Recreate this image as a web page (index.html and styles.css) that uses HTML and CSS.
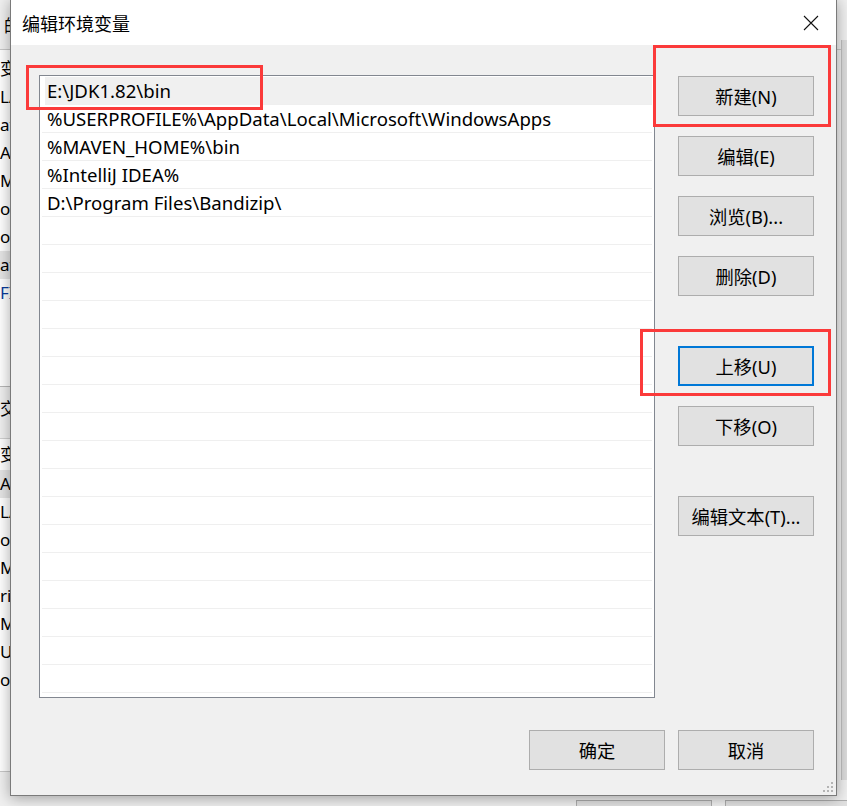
FILE: index.html
```html
<!DOCTYPE html>
<html lang="zh">
<head>
<meta charset="utf-8">
<title>编辑环境变量</title>
<link rel="stylesheet" href="styles.css">
</head>
<body>
<div class="stage">
  <div class="bgwin">
    <div class="bg-top"><span class="bg-clip">的</span></div>
    <div class="bg-list">
      <div class="bg-head"><span class="bg-clip">变量</span></div>
      <div class="bg-row"><span class="bg-clip">LA</span></div>
      <div class="bg-row"><span class="bg-clip">at</span></div>
      <div class="bg-row"><span class="bg-clip">AV</span></div>
      <div class="bg-row"><span class="bg-clip">MA</span></div>
      <div class="bg-row"><span class="bg-clip">on</span></div>
      <div class="bg-row"><span class="bg-clip">on</span></div>
      <div class="bg-row bg-sel"><span class="bg-clip">at</span></div>
      <div class="bg-row bg-blue"><span class="bg-clip">FI</span></div>
    </div>
    <div class="bg-gap"><span class="bg-clip">交</span></div>
    <div class="bg-list bg-list2">
      <div class="bg-head"><span class="bg-clip">变量</span></div>
      <div class="bg-row bg-sel"><span class="bg-clip">A</span></div>
      <div class="bg-row"><span class="bg-clip">LA</span></div>
      <div class="bg-row"><span class="bg-clip">o</span></div>
      <div class="bg-row"><span class="bg-clip">M</span></div>
      <div class="bg-row"><span class="bg-clip">ri</span></div>
      <div class="bg-row"><span class="bg-clip">MA</span></div>
      <div class="bg-row"><span class="bg-clip">U</span></div>
      <div class="bg-row"><span class="bg-clip">os</span></div>
    </div>
    <div class="bg-right"></div>
    <div class="bg-btn bg-btn1"></div>
    <div class="bg-btn bg-btn2"></div>
  </div>

  <div class="dialog">
    <div class="titlebar">
      <span class="title">编辑环境变量</span>
      <svg class="close" width="16" height="16" viewBox="0 0 16 16"><path d="M1 1 L15 15 M15 1 L1 15" stroke="#111" stroke-width="1.1" fill="none"/></svg>
    </div>
    <div class="main">
      <div class="listbox">
        <div class="row sel">E:\JDK1.82\bin</div>
        <div class="row">%USERPROFILE%\AppData\Local\Microsoft\WindowsApps</div>
        <div class="row">%MAVEN_HOME%\bin</div>
        <div class="row">%IntelliJ IDEA%</div>
        <div class="row">D:\Program Files\Bandizip\</div>
        <div class="row"></div><div class="row"></div><div class="row"></div>
        <div class="row"></div><div class="row"></div><div class="row"></div>
        <div class="row"></div><div class="row"></div><div class="row"></div>
        <div class="row"></div><div class="row"></div><div class="row"></div>
        <div class="row"></div><div class="row"></div><div class="row"></div>
        <div class="row"></div><div class="row"></div><div class="row"></div>
      </div>
      <div class="btncol">
        <button class="btn">新建(N)</button>
        <button class="btn">编辑(E)</button>
        <button class="btn">浏览(B)...</button>
        <button class="btn">删除(D)</button>
        <button class="btn focus gap">上移(U)</button>
        <button class="btn">下移(O)</button>
        <button class="btn gap">编辑文本(T)...</button>
      </div>
    </div>
    <div class="footer">
      <button class="btn">确定</button>
      <button class="btn">取消</button>
    </div>
    <div class="grip">
      <i class="d1"></i><i class="d2"></i><i class="d3"></i><i class="d4"></i><i class="d5"></i><i class="d6"></i>
    </div>
  </div>

  <div class="mark mark1"></div>
  <div class="mark mark2"></div>
  <div class="mark mark3"></div>
</div>
</body>
</html>
```
FILE: styles.css
```css
* { box-sizing: border-box; }
html, body { margin: 0; padding: 0; }
body {
  width: 847px;
  height: 806px;
  overflow: hidden;
  font-family: "Noto Sans", "Noto Sans CJK SC", sans-serif;
  color: #000;
}
.stage {
  position: relative;
  width: 847px;
  height: 806px;
  background: #f0f0f0;
  overflow: hidden;
}

/* background window */
.bgwin {
  position: absolute;
  inset: 0;
  font-size: 17px;
}
.bg-top {
  height: 50px;
  background: #f0f0f0;
  border-bottom: 1px solid #c8c8c8;
  padding-top: 12px;
  padding-left: 4px;
}
.bg-clip { display: block; white-space: nowrap; line-height: 28px; }
.bg-list {
  width: 40px;
  height: 337px;
  background: #fff;
  border-bottom: 1px solid #b8b8b8;
}
.bg-head {
  height: 33px;
  padding-top: 5px;
}
.bg-row { height: 28px; }
.bg-sel { background: #e5e5e5; }
.bg-blue { color: #0a3a9a; }
.bg-gap {
  width: 40px;
  height: 52px;
  padding-top: 8px;
  border-bottom: 1px solid #d0d0d0;
}
.bg-list2 { height: 333px; border-bottom: 1px solid #c8c8c8; }
.bg-list2 .bg-head { height: 31px; padding-top: 2px; }
.bg-right {
  position: absolute;
  left: 841px;
  top: 40px;
  width: 6px;
  height: 740px;
  background: #dcdcdc;
  border-left: 1px solid #c0c0c0;
}
.bg-btn {
  position: absolute;
  top: 800px;
  height: 30px;
  background: #e1e1e1;
  border: 1px solid #adadad;
}
.bg-btn1 { left: 576px; width: 136px; }
.bg-btn2 { left: 725px; width: 136px; }

/* dialog */
.dialog {
  position: absolute;
  left: 10px;
  top: -1px;
  width: 827px;
  height: 797px;
  background: #f0f0f0;
  border: 1px solid #7a7a7a;
  box-shadow: 0 2px 14px rgba(0, 0, 0, 0.35);
  display: flex;
  flex-direction: column;
  font-family: "Noto Sans", "Noto Sans CJK SC", sans-serif;
}
.titlebar {
  height: 45px;
  background: #fff;
  display: flex;
  align-items: center;
  justify-content: space-between;
  padding: 0 17px 0 11px;
  flex-shrink: 0;
}
.title {
  font-family: "Noto Sans CJK SC", sans-serif;
  font-size: 18px;
  color: #000;
}
.close { display: block; }

.main {
  display: flex;
  padding: 30px 0 0 28px;
}
.listbox {
  width: 616px;
  height: 623px;
  background: #fff;
  border: 1px solid #828790;
  padding: 1px 1px 0 1px;
  overflow: hidden;
  flex-shrink: 0;
}
.row {
  height: 28px;
  border-bottom: 1px solid #efefef;
  padding-left: 5px;
  font-size: 18.6px;
  line-height: 27px;
  white-space: nowrap;
  margin: 0 1px;
}
.row.sel {
  background: #f0f0f0;
  margin-left: 4px;
  padding-left: 2px;
}
.btncol {
  display: flex;
  flex-direction: column;
  gap: 20px;
  margin-left: 23px;
  padding-top: 1px;
}
.btn {
  width: 136px;
  height: 40px;
  background: #e1e1e1;
  border: 1px solid #adadad;
  font-family: "Noto Sans", "Noto Sans CJK SC", sans-serif;
  font-size: 18.3px;
  color: #000;
  padding: 0;
  margin: 0;
  white-space: nowrap;
}
.btn.gap { margin-top: 30px; }
.btn.focus { border: 2px solid #0078d7; }

.footer {
  display: flex;
  justify-content: flex-end;
  gap: 13px;
  padding: 32px 22px 0 0;
}

.grip {
  position: absolute;
  right: 3px;
  bottom: 3px;
  width: 10px;
  height: 10px;
}
.grip i {
  position: absolute;
  width: 2px;
  height: 2px;
  background: #b4b4b4;
}
.grip .d1 { right: 0; bottom: 0; }
.grip .d2 { right: 4px; bottom: 0; }
.grip .d3 { right: 8px; bottom: 0; }
.grip .d4 { right: 0; bottom: 4px; }
.grip .d5 { right: 4px; bottom: 4px; }
.grip .d6 { right: 0; bottom: 8px; }

/* red annotation boxes */
.mark {
  position: absolute;
  border: 3px solid #fb3a3a;
}
.mark1 { left: 26px; top: 65px; width: 237px; height: 45px; }
.mark2 { left: 653px; top: 45px; width: 178px; height: 82px; }
.mark3 { left: 640px; top: 329px; width: 191px; height: 67px; }
```
